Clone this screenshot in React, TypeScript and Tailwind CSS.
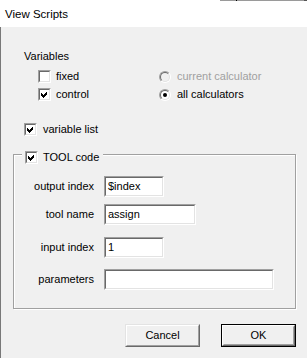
import React from 'react';

function CheckBox({ checked }: { checked?: boolean }) {
  return (
    <span className="flex h-[13px] w-[13px] shrink-0 border border-t-[#a0a0a0] border-l-[#a0a0a0] border-r-white border-b-white">
      <span className="flex h-full w-full items-center justify-center border border-t-[#696969] border-l-[#696969] border-r-[#e3e3e3] border-b-[#e3e3e3] bg-white">
        {checked && (
          <svg width="7" height="7" viewBox="0 0 7 7" shapeRendering="crispEdges">
            <path d="M0 2L2 4L6 0V3L2 7L0 5Z" fill="#000" />
          </svg>
        )}
      </span>
    </span>
  );
}

function Radio({ selected, disabled }: { selected?: boolean; disabled?: boolean }) {
  return (
    <span className="flex h-[12px] w-[12px] shrink-0 rounded-full border border-t-[#a0a0a0] border-l-[#a0a0a0] border-r-white border-b-white">
      <span
        className={`flex h-full w-full items-center justify-center rounded-full border border-t-[#696969] border-l-[#696969] border-r-[#e3e3e3] border-b-[#e3e3e3] ${
          disabled ? 'bg-[#f0f0f0]' : 'bg-white'
        }`}
      >
        {selected && <span className="h-[4px] w-[4px] rounded-full bg-black" />}
      </span>
    </span>
  );
}

function TextBox({ className, value }: { className: string; value?: string }) {
  return (
    <div
      className={`flex h-[21px] shrink-0 border border-t-[#a0a0a0] border-l-[#a0a0a0] border-r-white border-b-white ${className}`}
    >
      <div className="flex h-full w-full items-center border border-t-[#696969] border-l-[#696969] border-r-[#e3e3e3] border-b-[#e3e3e3] bg-white pl-[2px] leading-[13px]">
        {value}
      </div>
    </div>
  );
}

const fields = [
  { label: 'output index', value: '$index', width: 'w-[60px]', mt: 'mt-[12px]' },
  { label: 'tool name', value: 'assign', width: 'w-[92px]', mt: 'mt-[7px]' },
  { label: 'input index', value: '1', width: 'w-[60px]', mt: 'mt-[12px]' },
  { label: 'parameters', value: '', width: 'w-[170px]', mt: 'mt-[11px]' },
];

export default function App() {
  return (
    <div className="flex h-[358px] w-[307px] flex-col overflow-hidden bg-[#f0f0f0] font-['Liberation_Sans',Arial,sans-serif] text-[11px] text-black">
      {/* Title bar */}
      <div className="flex h-[27px] shrink-0 flex-col bg-white">
        <div className="flex h-px">
          <div className="w-[220px]" />
          <div className="w-[16px] bg-[#9a9a9a]" />
          <div className="w-px bg-black" />
          <div className="flex-1 bg-[#9a9a9a]" />
          <div className="w-[3px] bg-[#555]" />
        </div>
        <div className="mt-[7px] pl-[5px] text-[11.5px] leading-[13px]">View Scripts</div>
      </div>

      {/* Body */}
      <div className="flex flex-1 flex-col border-l border-l-[#787878]">
        <div className="ml-[23px] mt-[23px] leading-[13px]">Variables</div>

        <div className="mt-[7px] flex">
          <div className="ml-[37px] flex w-[121px] flex-col gap-[5px]">
            <div className="flex h-[13px] items-center gap-[5px] leading-[13px]">
              <CheckBox />
              <span>fixed</span>
            </div>
            <div className="flex h-[13px] items-center gap-[5px] leading-[13px]">
              <CheckBox checked />
              <span>control</span>
            </div>
          </div>
          <div className="flex flex-col gap-[5px]">
            <div className="flex h-[13px] items-center gap-[6px] leading-[13px]">
              <Radio disabled />
              <span className="text-[#a0a0a0]">current calculator</span>
            </div>
            <div className="flex h-[13px] items-center gap-[6px] leading-[13px]">
              <Radio selected />
              <span>all calculators</span>
            </div>
          </div>
        </div>

        <div className="ml-[23px] mt-[22px] flex h-[13px] items-center gap-[6px] leading-[13px]">
          <CheckBox checked />
          <span>variable list</span>
        </div>

        {/* TOOL code group */}
        <div className="ml-[12px] mt-[18px] flex h-[155px] w-[283px] flex-col border border-[#a0a0a0] shadow-[inset_1px_1px_0_#fff,1px_1px_0_#fff]">
          <div className="-mt-[4px] flex h-[13px]">
            <div className="ml-[8px] flex items-center gap-[5px] bg-[#f0f0f0] pl-[3px] pr-[4px] leading-[13px]">
              <CheckBox checked />
              <span>TOOL code</span>
            </div>
          </div>
          {fields.map((f) => (
            <div key={f.label} className={`flex items-center ${f.mt}`}>
              <div className="w-[80px] text-right leading-[13px]">{f.label}</div>
              <TextBox className={`ml-[10px] ${f.width}`} value={f.value} />
            </div>
          ))}
        </div>

        {/* Buttons */}
        <div className="ml-[124px] mt-[15px] flex gap-[21px]">
          <button className="flex h-[23px] w-[75px] border border-t-[#e3e3e3] border-l-[#e3e3e3] border-r-[#696969] border-b-[#696969] bg-[#f0f0f0]">
            <span className="flex h-full w-full items-center justify-center border border-t-white border-l-white border-r-[#a0a0a0] border-b-[#a0a0a0] leading-[13px]">
              Cancel
            </span>
          </button>
          <button className="flex h-[23px] w-[75px] border border-black bg-[#f0f0f0]">
            <span className="flex h-full w-full border border-t-white border-l-white border-r-[#696969] border-b-[#696969]">
              <span className="flex h-full w-full items-center justify-center border border-t-[#f0f0f0] border-l-[#f0f0f0] border-r-[#a0a0a0] border-b-[#a0a0a0] leading-[13px]">
                OK
              </span>
            </span>
          </button>
        </div>
      </div>
    </div>
  );
}
